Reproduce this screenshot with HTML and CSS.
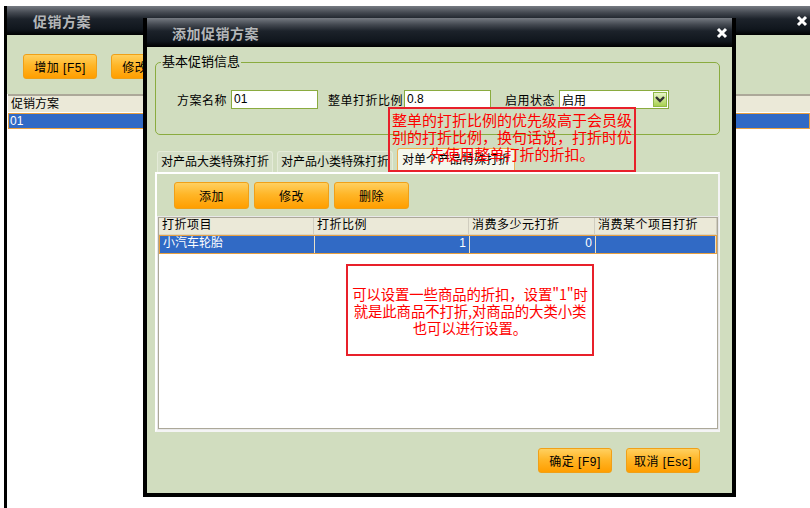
FILE: index.html
```html
<!DOCTYPE html>
<html lang="zh-CN">
<head>
    <meta charset="UTF-8">
    <title>促销方案</title>
    <link rel="stylesheet" href="styles.css">
</head>
<body>

    <!-- background window -->
    <div class="win main">
        <div class="titlebar">
            <span class="title">促销方案</span>
            <svg class="close" width="12" height="12" viewBox="0 0 12 12"><path d="M2 2L10 10M10 2L2 10" stroke="#fff" stroke-width="3"/></svg>
        </div>
        <div class="toolbar">
            <button class="obtn">增加 [F5]</button>
            <button class="obtn">修改 [F6]</button>
        </div>
        <div class="list">
            <div class="list-head">促销方案</div>
            <div class="list-row sel">01</div>
        </div>
    </div>

    <!-- dialog -->
    <div class="win dialog">
        <div class="titlebar">
            <span class="title">添加促销方案</span>
            <svg class="close" width="12" height="12" viewBox="0 0 12 12"><path d="M2 2L10 10M10 2L2 10" stroke="#fff" stroke-width="3"/></svg>
        </div>
        <div class="dlg-body">
            <fieldset class="basic">
                <legend>基本促销信息</legend>
                <div class="fields">
                    <label>方案名称</label>
                    <div class="input">01</div>
                    <label class="l2">整单打折比例</label>
                    <div class="input">0.8</div>
                    <label class="l3">启用状态</label>
                    <div class="select">
                        <span>启用</span>
                        <span class="drop">
                            <svg width="10" height="7" viewBox="0 0 10 7"><path d="M1 1L5 5L9 1" fill="none" stroke="#333" stroke-width="2.4"/></svg>
                        </span>
                    </div>
                </div>
            </fieldset>

            <div class="tabs">
                <div class="tab">对产品大类特殊打折</div>
                <div class="tab">对产品小类特殊打折</div>
                <div class="tab active">对单个产品特殊打折</div>
            </div>
            <div class="panel">
                <div class="panel-tools">
                    <button class="obtn big">添加</button>
                    <button class="obtn big">修改</button>
                    <button class="obtn big">删除</button>
                </div>
                <div class="grid">
                    <div class="grow head">
                        <div class="c1">打折项目</div>
                        <div class="c2">打折比例</div>
                        <div class="c3">消费多少元打折</div>
                        <div class="c4">消费某个项目打折</div>
                    </div>
                    <div class="grow sel">
                        <div class="c1">小汽车轮胎</div>
                        <div class="c2 num">1</div>
                        <div class="c3 num">0</div>
                        <div class="c4"></div>
                    </div>
                </div>
            </div>

            <div class="footer">
                <button class="obtn">确定 [F9]</button>
                <button class="obtn">取消 [Esc]</button>
            </div>
        </div>

        <div class="note note1">整单的打折比例的优先级高于会员级<br>别的打折比例，换句话说，打折时优<br>先使用整单打折的折扣。</div>
        <div class="note note2">可以设置一些商品的折扣，设置"1"时<br>就是此商品不打折,对商品的大类小类<br>也可以进行设置。</div>
    </div>

</body>
</html>
```

FILE: styles.css
```css
body {
    margin: 0;
    width: 810px;
    height: 508px;
    position: relative;
    overflow: hidden;
    background: #fff;
    font-family: "Liberation Sans", "Noto Sans CJK SC", sans-serif;
    font-size: 12px;
    color: #000;
}

/* Windows */
.win {
    position: absolute;
    box-sizing: border-box;
    display: flex;
    flex-direction: column;
}
.main {
    left: 4px;
    top: 6px;
    width: 806px;
    height: 510px;
    border-left: 3px solid #000;
    background: #fff;
}
.dialog {
    left: 143px;
    top: 18px;
    width: 593px;
    height: 479px;
    border: 4px solid #000;
    border-top: 0;
    background: #d1ddbf;
}

.titlebar {
    height: 29px;
    flex: none;
    display: flex;
    align-items: center;
    justify-content: space-between;
    background: linear-gradient(#767b82 0%, #454a52 22%, #1c222a 45%, #10161d 80%, #000 100%);
}
.title {
    color: #b4b6b8;
    font-size: 14px;
    font-weight: bold;
    letter-spacing: 0.5px;
}
.main .title { padding-left: 26px; }
.dialog .title { padding-left: 25px; }
.main .close { margin-right: 2px; }
.dialog .close { margin-right: 4px; }

/* Orange buttons */
.obtn {
    box-sizing: border-box;
    width: 74px;
    height: 25px;
    padding: 0;
    border: 1px solid #f0a018;
    border-radius: 3px;
    background: linear-gradient(#ffd060 0%, #ffb628 45%, #ff9e00 100%);
    font-family: inherit;
    font-size: 12px;
    letter-spacing: 0.5px;
    color: #000;
}
.obtn.big {
    width: 75px;
    height: 27px;
}

/* Background window */
.toolbar {
    height: 59px;
    flex: none;
    background: #d1ddbf;
    display: flex;
    align-items: center;
    gap: 14px;
    padding-left: 16px;
    padding-top: 3px;
    box-sizing: border-box;
}
.list {
    padding-left: 1px;
}
.list-head {
    height: 16px;
    line-height: 16px;
    background: #ebe9d8;
    border-top: 2px solid #aca899;
    padding-left: 3px;
}
.list-row {
    height: 14px;
    line-height: 14px;
    margin-top: 1px;
    padding-left: 1px;
}
.sel {
    background: #316ac5;
    color: #fff;
    border: 1px solid #e8a040;
}

/* Dialog body */
.dlg-body {
    flex: 1;
    display: flex;
    flex-direction: column;
    padding: 0 12px 0 8px;
}
.basic {
    margin: 8px 0 0 0;
    padding: 21px 0 23px 21px;
    border: 1px solid #8aab3f;
    border-radius: 5px;
    height: 80px;
    box-sizing: border-box;
}
.basic legend {
    padding: 0 1px;
    margin-left: -16px;
    font-size: 13px;
    line-height: 14px;
}
.fields {
    display: flex;
    align-items: center;
    height: 19px;
}
.fields label {
    margin-right: 4px;
    letter-spacing: 0.5px;
}
.fields .l2 { margin-left: 10px; margin-right: 1px; }
.fields .l3 { margin-left: 14px; }
.input {
    box-sizing: border-box;
    width: 87px;
    height: 19px;
    background: #fff;
    border: 1px solid #8aab3f;
    line-height: 17px;
    padding-left: 2px;
}
.select {
    box-sizing: border-box;
    width: 110px;
    height: 19px;
    background: #fff;
    border: 1px solid #8aab3f;
    display: flex;
    justify-content: space-between;
    align-items: center;
    padding-left: 2px;
}
.drop {
    width: 14px;
    height: 15px;
    margin-right: 1px;
    background: linear-gradient(#e8f5c8, #a8d050);
    border: 1px solid #90b848;
    box-sizing: border-box;
    display: flex;
    align-items: center;
    justify-content: center;
}

/* Tabs */
.tabs {
    display: flex;
    gap: 4px;
    margin: 13px 0 0 2px;
    height: 24px;
    align-items: flex-end;
}
.tab {
    box-sizing: border-box;
    width: 116px;
    height: 21px;
    line-height: 20px;
    text-align: center;
    background: #d6e0c8;
    border: 1px solid #e4ebd8;
    border-bottom: 0;
    border-radius: 3px 3px 0 0;
}
.tab.active {
    width: 118px;
    height: 24px;
    line-height: 23px;
    background: #f4f6ec;
    border: 1px solid #f0b050;
    border-bottom: 0;
}

.panel {
    height: 260px;
    box-sizing: border-box;
    border: 2px solid #fff;
    border-right-color: #f4f4f4;
    border-bottom-color: #f4f4f4;
    display: flex;
    flex-direction: column;
}
.panel-tools {
    display: flex;
    gap: 5px;
    padding: 8px 0 0 17px;
}
.grid {
    flex: 1;
    margin: 8px 0 1px 1px;
    background: #fff;
    border: 1px solid #aca899;
    box-shadow: 0 0 0 1px #e8e8e8;
}
.grow {
    display: flex;
    height: 16px;
    line-height: 15px;
}
.grow > div {
    box-sizing: border-box;
    padding: 0 3px;
    border-right: 1px solid #d0cdbf;
}
.head {
    background: #ebe9d8;
    border-bottom: 1px solid #d8d5c5;
    letter-spacing: 0.5px;
}
.grow.sel {
    height: 17px;
}
.grow.sel > div { border-right-color: #e8e0c8; }
.c1 { width: 155px; }
.c2 { width: 155px; }
.c3 { width: 126px; }
.c4 { flex: 1; }
.num { text-align: right; }

.footer {
    display: flex;
    justify-content: flex-end;
    gap: 14px;
    padding: 16px 20px 0 0;
}

/* Red annotations */
.note {
    position: absolute;
    box-sizing: border-box;
    border: 2px solid #e8202a;
    color: #ff0000;
    font-family: "Noto Sans CJK SC", sans-serif;
    font-size: 15px;
    line-height: 17px;
    text-align: center;
    white-space: nowrap;
    display: flex;
    align-items: center;
    justify-content: center;
}
.note1 {
    left: 241px;
    top: 89px;
    width: 248px;
    height: 65px;
    align-items: flex-start;
    padding-top: 2px;
}
.note2 {
    left: 199px;
    top: 246px;
    width: 248px;
    height: 92px;
    font-size: 14.4px;
    letter-spacing: -0.1px;
}
```
